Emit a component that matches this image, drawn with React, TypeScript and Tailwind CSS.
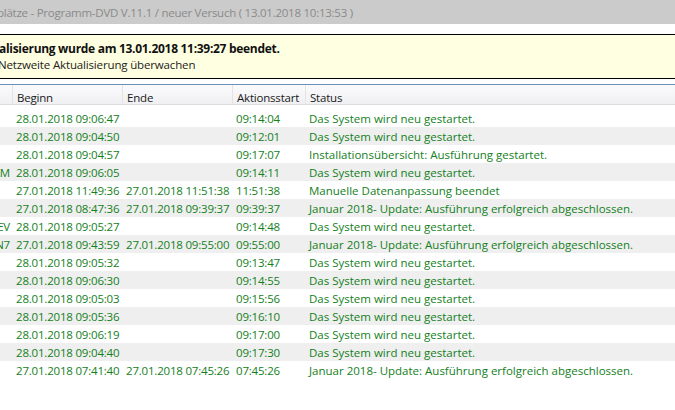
import React from "react";

const rows: [string, string, string, string, string][] = [
  ["", "28.01.2018 09:06:47", "", "09:14:04", "Das System wird neu gestartet."],
  ["", "28.01.2018 09:04:50", "", "09:12:01", "Das System wird neu gestartet."],
  ["", "28.01.2018 09:04:57", "", "09:17:07", "Installationsübersicht: Ausführung gestartet."],
  ["PC-TEAM", "28.01.2018 09:06:05", "", "09:14:11", "Das System wird neu gestartet."],
  ["", "27.01.2018 11:49:36", "27.01.2018 11:51:38", "11:51:38", "Manuelle Datenanpassung beendet"],
  ["", "27.01.2018 08:47:36", "27.01.2018 09:39:37", "09:39:37", "Januar 2018- Update: Ausführung erfolgreich abgeschlossen."],
  ["PC-DEV", "28.01.2018 09:05:27", "", "09:14:48", "Das System wird neu gestartet."],
  ["PC-WIN7", "27.01.2018 09:43:59", "27.01.2018 09:55:00", "09:55:00", "Januar 2018- Update: Ausführung erfolgreich abgeschlossen."],
  ["", "28.01.2018 09:05:32", "", "09:13:47", "Das System wird neu gestartet."],
  ["", "28.01.2018 09:06:30", "", "09:14:55", "Das System wird neu gestartet."],
  ["", "28.01.2018 09:05:03", "", "09:15:56", "Das System wird neu gestartet."],
  ["", "28.01.2018 09:05:36", "", "09:16:10", "Das System wird neu gestartet."],
  ["", "28.01.2018 09:06:19", "", "09:17:00", "Das System wird neu gestartet."],
  ["", "28.01.2018 09:04:40", "", "09:17:30", "Das System wird neu gestartet."],
  ["", "27.01.2018 07:41:40", "27.01.2018 07:45:26", "07:45:26", "Januar 2018- Update: Ausführung erfolgreich abgeschlossen."],
];

export default function App() {
  return (
    <div
      className="w-[675px] h-[410px] overflow-hidden bg-white flex flex-col"
      style={{ fontFamily: '"Open Sans", "Noto Sans", sans-serif' }}
    >
      <div className="h-[24px] bg-[#cbcbcb] flex items-center overflow-hidden pt-[1px]">
        <span className="whitespace-nowrap text-[11.5px] text-[#8a8a8a] ml-[-3px] tracking-[-0.25px]">
          plätze - Programm-DVD V.11.1 / neuer Versuch ( 13.01.2018 10:13:53 )
        </span>
      </div>
      <div className="h-[10px]" />
      <div className="h-[45px] bg-[#ffffe1] border-y border-black flex flex-col justify-center overflow-hidden">
        <div className="whitespace-nowrap text-[12px] font-bold text-[#111] ml-[-1px] leading-[17px] tracking-[-0.3px]">
          alisierung wurde am 13.01.2018 11:39:27 beendet.
        </div>
        <div className="whitespace-nowrap text-[11.5px] text-[#222] ml-[-2px] leading-[16px] tracking-[-0.15px]">
          Netzweite Aktualisierung überwachen
        </div>
      </div>
      <div className="h-[5px]" />
      <div className="border-t border-[#6d8fb5]" />
      <div className="h-[20px] flex bg-gradient-to-b from-[#fbfbfd] to-[#f0f0f2] border-b border-[#dcdcdc] text-[11.5px] text-[#1a1a1a] tracking-[-0.2px]">
        <div className="w-[13px] border-r border-[#e4e4e4]" />
        <div className="w-[110px] border-r border-[#e4e4e4] pl-[4px] pt-[4px]">Beginn</div>
        <div className="w-[110px] border-r border-[#e4e4e4] pl-[4px] pt-[4px]">Ende</div>
        <div className="w-[73px] border-r border-[#e4e4e4] pl-[4px] pt-[4px]">Aktionsstart</div>
        <div className="flex-1 pl-[4px] pt-[4px]">Status</div>
      </div>
      <div className="h-[4px]" />
      <div className="flex flex-col text-[11.5px] text-[#14801c] tracking-[-0.2px]">
        {rows.map((r, i) => (
          <div key={i} className={`h-[18px] flex items-center whitespace-nowrap pt-[1px] ${i % 2 === 1 ? "bg-[#efefef]" : "bg-white"}`}>
            <div className="w-[13px] flex justify-end overflow-hidden">
              <span className="pr-[3px]">{r[0]}</span>
            </div>
            <div className="w-[110px] pl-[3px]">{r[1]}</div>
            <div className="w-[110px] pl-[3px]">{r[2]}</div>
            <div className="w-[73px] pl-[3px]">{r[3]}</div>
            <div className="flex-1 pl-[3px] tracking-[0px]">{r[4]}</div>
          </div>
        ))}
      </div>
    </div>
  );
}
